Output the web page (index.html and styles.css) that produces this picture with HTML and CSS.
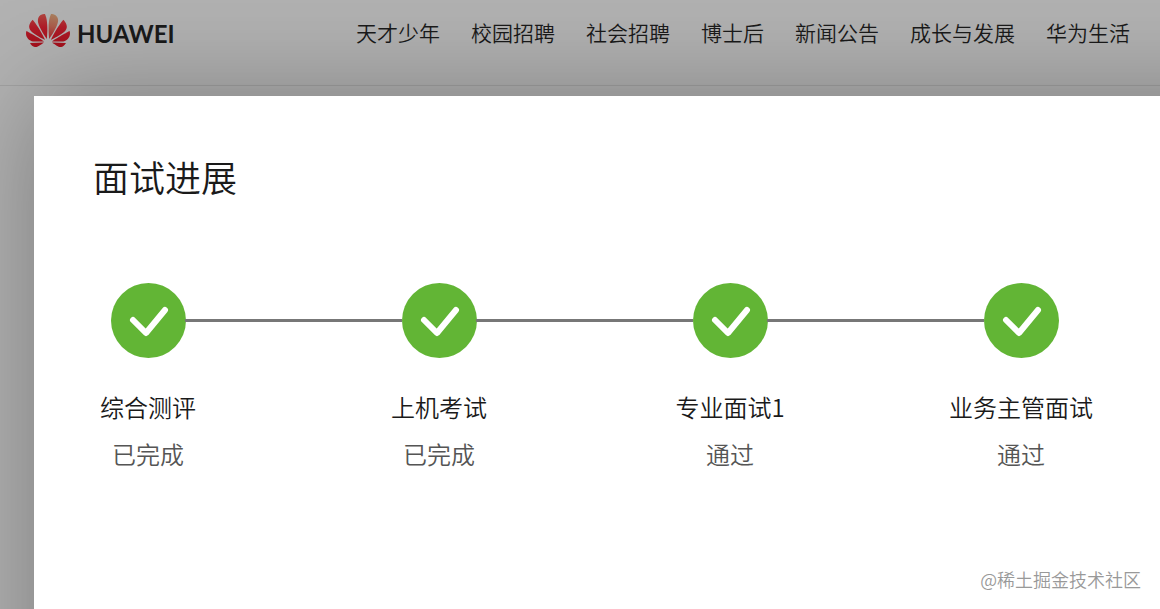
FILE: index.html
```html
<!DOCTYPE html>
<html lang="zh-CN">
<head>
  <meta charset="UTF-8">
  <meta name="viewport" content="width=device-width, initial-scale=1">
  <title>面试进展</title>
  <link rel="stylesheet" href="styles.css">
</head>
<body>
  <div class="page">
    <header class="top-bar">
      <a class="logo" href="#">
        <svg class="logo-icon" viewBox="0 3 24 18" preserveAspectRatio="none" aria-hidden="true">
          <defs>
            <linearGradient id="petal" gradientUnits="userSpaceOnUse" x1="0" y1="3" x2="0" y2="21">
              <stop offset="0" stop-color="#b0453f"/>
              <stop offset="0.4" stop-color="#b01c28"/>
              <stop offset="1" stop-color="#a30f1b"/>
            </linearGradient>
            <linearGradient id="petal-light" gradientUnits="userSpaceOnUse" x1="15" y1="3" x2="13" y2="16">
              <stop offset="0" stop-color="#a9805f"/>
              <stop offset="0.5" stop-color="#ab5e4c"/>
              <stop offset="1" stop-color="#a82a30"/>
            </linearGradient>
          </defs>
          <g fill="url(#petal)">
            <path d="M3.67 6.14S1.82 7.91 1.72 9.78v.35c.08 1.51 1.22 2.4 1.22 2.4 1.83 1.79 6.26 4.04 7.3 4.55 0 0 .06.03.1-.01l.02-.04v-.04C7.52 10.8 3.67 6.14 3.67 6.14z"/>
            <path d="M9.65 18.6c-.02-.08-.1-.08-.1-.08l-7.38.26c.8 1.43 2.15 2.53 3.56 2.2.96-.25 3.16-1.78 3.88-2.3.06-.05.04-.09.04-.09z"/>
            <path d="M9.73 17.82C6.49 15.63.21 12.28.21 12.28c-.15.46-.2.9-.21 1.3v.07c0 1.07.4 1.82.4 1.82.8 1.69 2.34 2.2 2.34 2.2.7.3 1.4.31 1.4.31.12.02 4.4 0 5.54 0 .05 0 .08-.05.08-.05v-.06c0-.03-.03-.05-.03-.05z"/>
            <path d="M9.06 3.19a3.42 3.42 0 00-2.57 3.15v.41c.03.6.16 1.05.16 1.05.66 2.9 3.86 7.65 4.55 8.65.05.05.1.03.1.03a.1.1 0 00.06-.1c1.06-10.6-1.11-13.42-1.11-13.42-.32.02-1.19.23-1.19.23z"/>
            <path d="M14.44 18.53s-.07 0-.09.05c0 0-.01.07.03.1.7.51 2.85 2 3.88 2.3 0 0 .16.05.43.06h.14c.69-.02 1.9-.37 3-2.26l-7.4-.25z"/>
            <path d="M22.27 10.12c.14-2.06-1.94-3.97-1.94-3.98 0 0-3.85 4.66-6.67 10.8 0 0-.03.08.02.13l.04.01h.06c1.06-.53 5.46-2.77 7.28-4.54 0 0 1.15-.93 1.21-2.42z"/>
            <path d="M23.79 12.26s-6.28 3.37-9.52 5.55c0 0-.05.04-.03.11 0 0 .03.06.07.06 1.16 0 5.56 0 5.67-.02 0 0 .57-.02 1.27-.29 0 0 1.56-.5 2.37-2.27 0 0 .73-1.45.17-3.14z"/>
          </g>
          <path fill="url(#petal-light)" d="M17.359 5.46s-.49-1.8-2.44-2.28c0 0-.57-.14-1.17-.22 0 0-2.18 2.81-1.12 13.43.01.07.06.08.06.08.07.03.1-.03.1-.03.72-1.03 3.9-5.76 4.55-8.64 0 0 .36-1.4.02-2.34z"/>
        </svg>
        <span>HUAWEI</span>
      </a>
      <nav class="nav">
        <a href="#">天才少年</a>
        <a href="#">校园招聘</a>
        <a href="#">社会招聘</a>
        <a href="#">博士后</a>
        <a href="#">新闻公告</a>
        <a href="#">成长与发展</a>
        <a href="#">华为生活</a>
      </nav>
    </header>

    <main class="modal">
      <h1>面试进展</h1>
      <ol class="steps">
        <li class="step">
          <div class="step-body">
            <svg class="check" viewBox="0 0 75 75" aria-hidden="true"><circle cx="37.5" cy="37.5" r="37.5"/><path d="M22 37l13 13 19-23"/></svg>
            <span class="name">综合测评</span>
            <span class="status">已完成</span>
          </div>
        </li>
        <li class="step">
          <div class="step-body">
            <svg class="check" viewBox="0 0 75 75" aria-hidden="true"><circle cx="37.5" cy="37.5" r="37.5"/><path d="M22 37l13 13 19-23"/></svg>
            <span class="name">上机考试</span>
            <span class="status">已完成</span>
          </div>
        </li>
        <li class="step">
          <div class="step-body">
            <svg class="check" viewBox="0 0 75 75" aria-hidden="true"><circle cx="37.5" cy="37.5" r="37.5"/><path d="M22 37l13 13 19-23"/></svg>
            <span class="name">专业面试1</span>
            <span class="status">通过</span>
          </div>
        </li>
        <li class="step">
          <div class="step-body">
            <svg class="check" viewBox="0 0 75 75" aria-hidden="true"><circle cx="37.5" cy="37.5" r="37.5"/><path d="M22 37l13 13 19-23"/></svg>
            <span class="name">业务主管面试</span>
            <span class="status">通过</span>
          </div>
        </li>
      </ol>
    </main>

    <div class="watermark">@稀土掘金技术社区</div>
  </div>
</body>
</html>
```
FILE: styles.css
```css
* {
  box-sizing: border-box;
}

body {
  margin: 0;
  font-family: "Noto Sans CJK SC", sans-serif;
  font-weight: 350;
  color: #1a1a1a;
  background-color: #b2b2b2;
}

a {
  color: inherit;
  text-decoration: none;
}

.page {
  position: relative;
  display: flex;
  flex-direction: column;
  min-height: 100vh;
  overflow: hidden;
}

.top-bar {
  display: flex;
  justify-content: space-between;
  align-items: flex-start;
  height: 86px;
  padding: 14px 30px 0 26px;
  border-bottom: 1px solid #a2a2a2;
}

.logo {
  display: flex;
  align-items: flex-end;
  gap: 7px;
  font-family: Lato, sans-serif;
  font-size: 24px;
  font-weight: 700;
  line-height: 26px;
}

.logo-icon {
  width: 44px;
  height: 33px;
}

.nav {
  display: flex;
  gap: 31px;
  font-size: 21px;
  line-height: 36px;
  white-space: nowrap;
}

.modal {
  position: relative;
  flex: 1;
  margin: 10px -120px -120px 34px;
  padding: 50px 204px 240px 59px;
  background-color: #fff;
  box-shadow: 0 0 100px rgba(0, 0, 0, 0.3);
}

h1 {
  margin: 0 0 77px;
  font-size: 36px;
  font-weight: 350;
  line-height: 60px;
}

.steps {
  display: flex;
  margin: 0;
  padding: 0;
  list-style: none;
}

.step {
  display: flex;
  flex: 1;
}

.step:last-child {
  flex: none;
}

.step:not(:last-child)::after {
  content: "";
  flex: 1;
  height: 3px;
  margin: 36px -18px 0;
  background-color: #777;
}

.step-body {
  display: flex;
  flex-direction: column;
  align-items: center;
  width: 110px;
  font-size: 24px;
  line-height: 36px;
  white-space: nowrap;
}

.check {
  width: 75px;
  height: 75px;
  margin-bottom: 31px;
}

.check circle {
  fill: #62b535;
}

.check path {
  fill: none;
  stroke: #fff;
  stroke-width: 6;
  stroke-linecap: round;
  stroke-linejoin: round;
}

.name {
  margin-bottom: 11px;
}

.status {
  color: #555;
}

.watermark {
  position: absolute;
  right: 19px;
  bottom: 17px;
  font-size: 18px;
  line-height: 26px;
  color: #999;
}
```
